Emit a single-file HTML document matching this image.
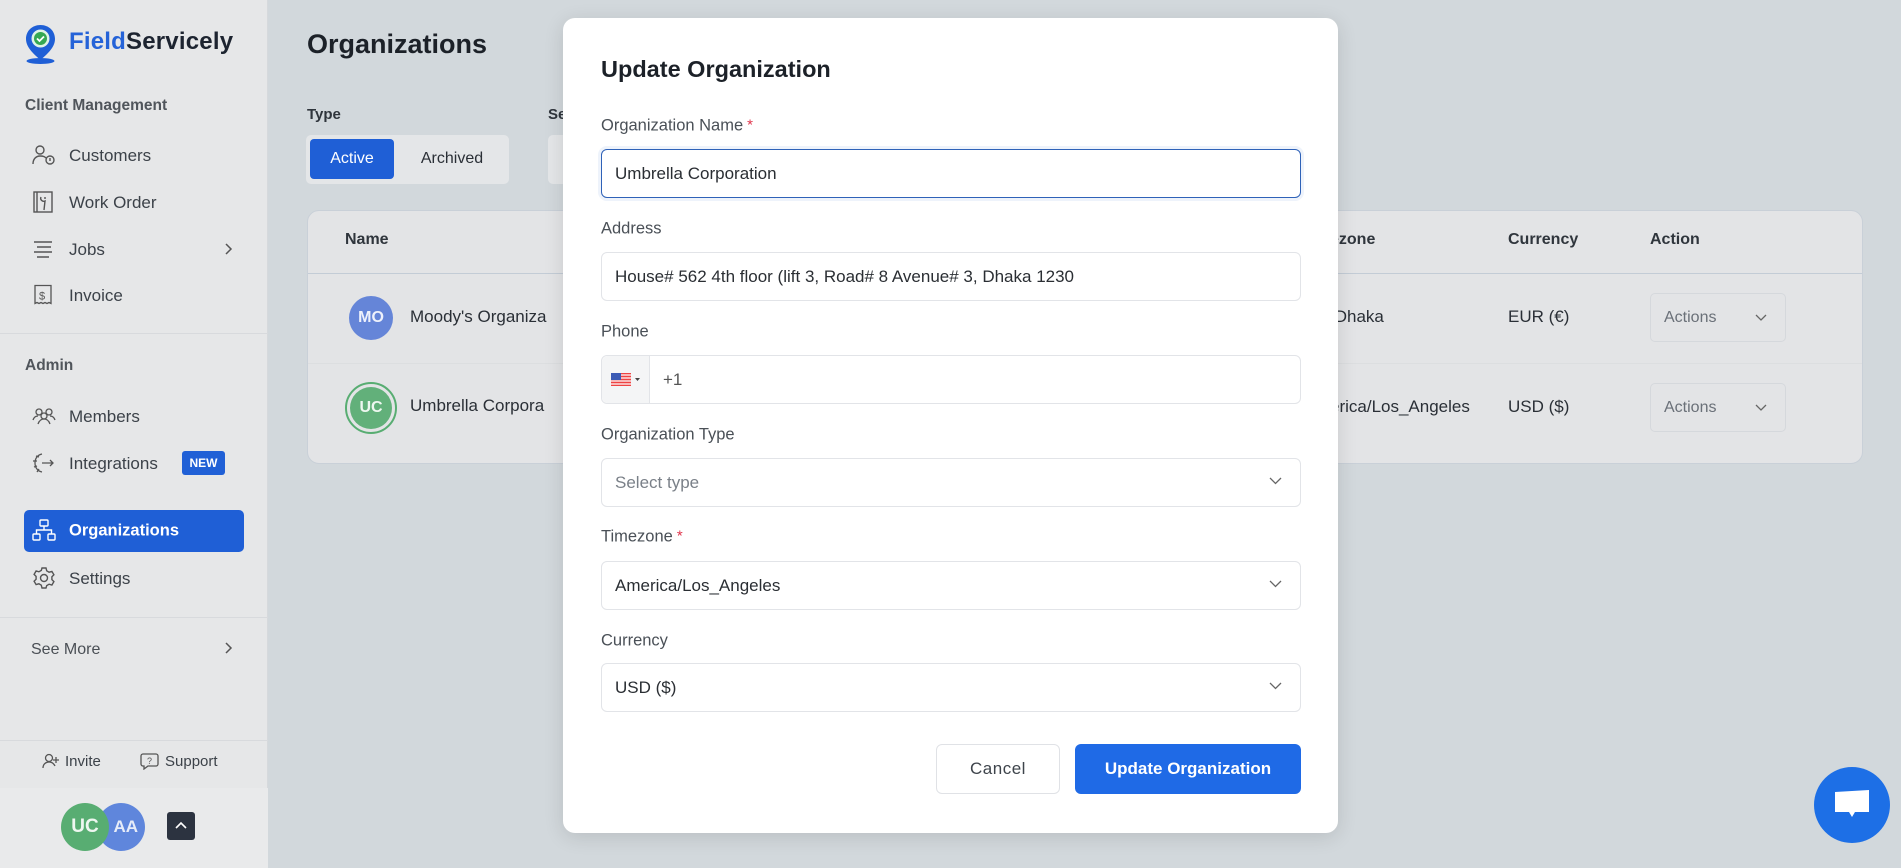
<!DOCTYPE html>
<html><head><meta charset="utf-8"><style>
*{box-sizing:border-box;margin:0;padding:0}
body{width:1901px;height:868px;overflow:hidden;font-family:"Liberation Sans",sans-serif;background:#d2d8dc;position:relative;color:#2a2f36}
.a{position:absolute}
.sb{left:0;top:0;width:268px;height:868px;background:#e6e7e8;border-right:1px solid #d6d9dc}
.nav{position:absolute;left:69px;font-size:17px;color:#3c4249;transform:translateY(-50%)}
.ic{position:absolute;left:32px;transform:translateY(-50%)}
.sec{position:absolute;left:25px;font-size:15.5px;font-weight:bold;color:#50555b;transform:translateY(-50%)}
.lbl{position:absolute;left:601px;font-size:16.5px;color:#4a5057;transform:translateY(-50%)}
.inp{position:absolute;left:601px;width:700px;height:49px;border:1px solid #e2e4e8;border-radius:6px;background:#fff;font-size:17px;color:#2a2e33;padding-left:13px;line-height:47px}
.chev{position:absolute;right:18px;top:18px}
.star{color:#e0334a;font-size:15px;vertical-align:top;margin-left:4px}
</style></head><body>
<div class="a sb"></div>
<svg class="a" style="left:24px;top:23px" width="33" height="42" viewBox="0 0 33 42"><path d="M16.5 2C8 2 2 8 2 16c0 9 9 16 14.5 21C22 32 31 25 31 16 31 8 25 2 16.5 2z" fill="#1f5fd6"/><ellipse cx="16.5" cy="38" rx="14" ry="3" fill="#1f5fd6"/><circle cx="16.5" cy="15.5" r="9" fill="#dff3e6"/><circle cx="16.5" cy="15.5" r="6.5" fill="#34a853"/><path d="M13 15.5l2.5 2.5 4.5-4.5" stroke="#fff" stroke-width="1.8" fill="none"/></svg>
<div class="a" style="left:69px;top:28px;font-size:24px;font-weight:bold;letter-spacing:0.2px"><span style="color:#2563d8">Field</span><span style="color:#1d2430">Servicely</span></div>
<div class="sec" style="top:106px">Client Management</div>
<svg class="ic" style="top:155px" width="24" height="22" viewBox="0 0 24 22" fill="none" stroke="#555" stroke-width="1.4"><circle cx="8" cy="6" r="4"/><path d="M1 20c0-5 3-8 7-8s5 1 6 2"/><circle cx="18" cy="16" r="4"/><path d="M18 14v3"/></svg>
<div class="nav" style="top:156px">Customers</div>
<svg class="ic" style="top:202px;left:33px" width="20" height="22" viewBox="0 0 20 22" fill="none" stroke="#555" stroke-width="1.4"><rect x="1" y="1" width="18" height="20"/><path d="M4 1v20"/><path d="M8 6a3 3 0 0 0 4 4l-1 9M12 6v2"/></svg>
<div class="nav" style="top:203px">Work Order</div>
<svg class="ic" style="top:249px;left:33px" width="20" height="18" viewBox="0 0 20 18" stroke="#555" stroke-width="1.6"><path d="M1 2h18M4 7h14M1 12h18M4 17h12"/></svg>
<div class="nav" style="top:250px">Jobs</div>
<svg class="a" style="left:224px;top:242px" width="9" height="14" viewBox="0 0 9 14" fill="none" stroke="#555" stroke-width="1.5"><path d="M2 2l5 5-5 5"/></svg>
<svg class="ic" style="top:295px;left:34px" width="18" height="21" viewBox="0 0 18 21" fill="none" stroke="#555" stroke-width="1.3"><path d="M1 1h16v18l-2-1-2 1-2-1-2 1-2-1-2 1-2-1-2 1z"/><text x="5" y="15" font-size="11" fill="#555" stroke="none" font-family="Liberation Sans">$</text></svg>
<div class="nav" style="top:296px">Invoice</div>
<div class="a" style="left:0;top:333px;width:268px;height:1px;background:#d8dadd"></div>
<div class="sec" style="top:366px">Admin</div>
<svg class="ic" style="top:416px" width="24" height="18" viewBox="0 0 24 18" fill="none" stroke="#555" stroke-width="1.3"><circle cx="7" cy="5" r="3"/><circle cx="17" cy="5" r="3"/><circle cx="12" cy="9" r="3"/><path d="M1 13c1-3 3-4 5-4M23 13c-1-3-3-4-5-4M6 17c1-3 3-5 6-5s5 2 6 5"/></svg>
<div class="nav" style="top:417px">Members</div>
<svg class="ic" style="top:463px" width="24" height="22" viewBox="0 0 24 22" fill="none" stroke="#555" stroke-width="1.3"><path d="M10 2C5 3 3 7 3 11s2 8 7 9M7 5L4 4M5 9H1M5 14l-3 1M7 17l-2 3"/><path d="M10 11h11M18 8l3 3-3 3"/></svg>
<div class="nav" style="top:464px">Integrations</div>
<div class="a" style="left:182px;top:451px;width:43px;height:24px;background:#2060d6;border-radius:3px;color:#fff;font-size:12px;font-weight:bold;text-align:center;line-height:24px">NEW</div>
<div class="a" style="left:24px;top:510px;width:220px;height:42px;background:#1f5fd6;border-radius:5px"></div>
<svg class="ic" style="top:530px" width="24" height="22" viewBox="0 0 24 22" fill="none" stroke="#fff" stroke-width="1.4"><rect x="8" y="1" width="8" height="6" rx="1"/><rect x="1" y="15" width="7" height="6" rx="1"/><rect x="16" y="15" width="7" height="6" rx="1"/><path d="M12 7v4M4.5 15v-4h15v4"/></svg>
<div class="nav" style="top:531px;color:#fff;font-weight:bold;font-size:16.5px">Organizations</div>
<svg class="ic" style="top:578px" width="24" height="24" viewBox="0 0 24 24" fill="none" stroke="#555" stroke-width="1.4"><circle cx="12" cy="12" r="3.5"/><path d="M10 2h4l.7 2.8 2.4 1.4 2.8-.8 2 3.4-2 2v2.8l2 2-2 3.4-2.8-.8-2.4 1.4L14 22h-4l-.7-2.8-2.4-1.4-2.8.8-2-3.4 2-2v-2.8l-2-2 2-3.4 2.8.8 2.4-1.4z"/></svg>
<div class="nav" style="top:579px">Settings</div>
<div class="a" style="left:0;top:617px;width:268px;height:1px;background:#d8dadd"></div>
<div class="nav" style="top:650px;left:31px;font-size:16px;color:#4a4f55">See More</div>
<svg class="a" style="left:224px;top:641px" width="9" height="14" viewBox="0 0 9 14" fill="none" stroke="#555" stroke-width="1.5"><path d="M2 2l5 5-5 5"/></svg>
<div class="a" style="left:0;top:740px;width:268px;height:1px;background:#d8dadd"></div>
<svg class="a" style="left:42px;top:753px" width="18" height="16" viewBox="0 0 18 16" fill="none" stroke="#555" stroke-width="1.3"><circle cx="7" cy="5" r="3.5"/><path d="M1 15c0-4 3-6 6-6s5 2 6 4M14 4v6M11 7h6"/></svg>
<div class="a" style="left:65px;top:753px;font-size:15px;color:#3c4249">Invite</div>
<svg class="a" style="left:140px;top:753px" width="19" height="17" viewBox="0 0 19 17" fill="none" stroke="#555" stroke-width="1.3"><path d="M3 1h13a2 2 0 0 1 2 2v8a2 2 0 0 1-2 2H8l-4 3v-3H3a2 2 0 0 1-2-2V3a2 2 0 0 1 2-2z"/><text x="7" y="11" font-size="9" fill="#555" stroke="none">?</text></svg>
<div class="a" style="left:165px;top:753px;font-size:15px;color:#3c4249">Support</div>
<div class="a" style="left:0;top:788px;width:268px;height:80px;background:#e9eaeb"></div>
<div class="a" style="left:97px;top:803px;width:48px;height:48px;border-radius:50%;background:#5f86dc;color:#e7ecf8;font-size:17px;font-weight:bold;line-height:48px;text-align:right;padding-right:7px">AA</div>
<div class="a" style="left:61px;top:803px;width:48px;height:48px;border-radius:50%;background:#58ad72;color:#eef7f0;font-size:19px;font-weight:bold;line-height:48px;text-align:center">UC</div>
<div class="a" style="left:167px;top:812px;width:28px;height:28px;border-radius:3px;background:#2c3340"></div>
<svg class="a" style="left:174px;top:821px" width="14" height="9" viewBox="0 0 14 9" fill="none" stroke="#fff" stroke-width="1.6"><path d="M2 7l5-5 5 5"/></svg>

<div class="a" style="left:307px;top:29px;font-size:27px;font-weight:bold;color:#1c2128">Organizations</div>
<div class="a" style="left:307px;top:106px;font-size:15px;font-weight:bold;color:#2f353c">Type</div>
<div class="a" style="left:548px;top:106px;font-size:15px;font-weight:bold;color:#2f353c">Se</div>
<div class="a" style="left:306px;top:135px;width:203px;height:49px;background:#e4e6e8;border-radius:5px"></div>
<div class="a" style="left:310px;top:139px;width:84px;height:40px;background:#1f5fd6;border-radius:4px;color:#fff;font-size:16px;text-align:center;line-height:40px">Active</div>
<div class="a" style="left:400px;top:139px;width:104px;height:40px;color:#2a2f36;font-size:16px;text-align:center;line-height:40px">Archived</div>
<div class="a" style="left:548px;top:135px;width:20px;height:49px;background:#e4e6e8;border-radius:5px 0 0 5px"></div>
<div class="a" style="left:307px;top:210px;width:1556px;height:254px;background:#e3e4e6;border:1px solid #c9d0d8;border-radius:12px;overflow:hidden">
 <div class="a" style="left:0;top:62px;width:100%;height:1px;background:#c3ccd6"></div>
 <div class="a" style="left:0;top:152px;width:100%;height:1px;background:#dcdee0"></div>
</div>
<div class="a" style="left:345px;top:231px;font-size:16px;font-weight:bold;color:#2f353c">Name</div>
<div class="a" style="left:349px;top:296px;width:44px;height:44px;border-radius:50%;background:#6585d8;color:#eef1fb;font-size:16px;font-weight:bold;line-height:44px;text-align:center">MO</div>
<div class="a" style="left:410px;top:307px;font-size:17px;color:#2a2f36">Moody's Organiza</div>
<div class="a" style="left:345px;top:382px;width:52px;height:52px;border-radius:50%;border:2px solid #58ad72;background:#e3e4e6"></div>
<div class="a" style="left:350px;top:387px;width:42px;height:42px;border-radius:50%;background:#62b07a;color:#eef7f0;font-size:16px;font-weight:bold;line-height:42px;text-align:center">UC</div>
<div class="a" style="left:410px;top:396px;font-size:17px;color:#2a2f36">Umbrella Corpora</div>
<div class="a" style="left:1330px;top:231px;font-size:16px;font-weight:bold;color:#2f353c">ezone</div>
<div class="a" style="left:1508px;top:231px;font-size:16px;font-weight:bold;color:#2f353c">Currency</div>
<div class="a" style="left:1650px;top:231px;font-size:16px;font-weight:bold;color:#2f353c">Action</div>
<div class="a" style="left:1330px;top:307px;font-size:17px">/Dhaka</div>
<div class="a" style="left:1508px;top:307px;font-size:17px">EUR (€)</div>
<div class="a" style="left:1330px;top:397px;font-size:17px">erica/Los_Angeles</div>
<div class="a" style="left:1508px;top:397px;font-size:17px">USD ($)</div>
<div class="a" style="left:1650px;top:293px;width:136px;height:49px;border:1px solid #d5d8dc;border-radius:5px;font-size:16px;color:#6a7078;line-height:47px;padding-left:13px">Actions</div>
<div class="a" style="left:1650px;top:383px;width:136px;height:49px;border:1px solid #d5d8dc;border-radius:5px;font-size:16px;color:#6a7078;line-height:47px;padding-left:13px">Actions</div>
<svg class="a" style="left:1755px;top:314px" width="12" height="8" viewBox="0 0 12 8" fill="none" stroke="#666" stroke-width="1.3"><path d="M1 1l5 5 5-5"/></svg>
<svg class="a" style="left:1755px;top:404px" width="12" height="8" viewBox="0 0 12 8" fill="none" stroke="#666" stroke-width="1.3"><path d="M1 1l5 5 5-5"/></svg>
<div class="a" style="left:1814px;top:767px;width:76px;height:76px;border-radius:50%;background:#1d6fe6"></div>
<svg class="a" style="left:1833px;top:789px" width="38" height="32" viewBox="0 0 38 32"><path d="M2 3l34-2v22H22l-3 5-3-5H2z" fill="#fff"/></svg>

<div class="a" style="left:563px;top:18px;width:775px;height:815px;background:#fff;border-radius:12px;box-shadow:0 4px 20px rgba(0,0,0,.12)"></div>
<div class="a" style="left:601px;top:56px;font-size:23.5px;font-weight:bold;color:#1c2128">Update Organization</div>
<div class="lbl" style="top:126px">Organization Name<span class="star">*</span></div>
<div class="inp" style="top:149px;border:1px solid #2f62b8;box-shadow:0 0 0 3px #eef3fb">Umbrella Corporation</div>
<div class="lbl" style="top:229px">Address</div>
<div class="inp" style="top:252px">House# 562 4th floor (lift 3, Road# 8 Avenue# 3, Dhaka 1230</div>
<div class="lbl" style="top:332px">Phone</div>
<div class="inp" style="top:355px;padding-left:61px;color:#555">+1</div>
<div class="a" style="left:602px;top:356px;width:48px;height:47px;background:#f4f5f6;border-right:1px solid #e2e4e8;border-radius:6px 0 0 6px"></div>
<svg class="a" style="left:611px;top:373px" width="30" height="13" viewBox="0 0 30 13"><rect width="20" height="13" fill="#e44"/><path d="M0 2h20M0 5h20M0 8h20M0 11h20" stroke="#fff" stroke-width="1.2"/><rect width="10" height="7" fill="#3b5bb5"/><path d="M24 5h5l-2.5 3z" fill="#444"/></svg>
<div class="lbl" style="top:435px">Organization Type</div>
<div class="inp" style="top:458px;color:#7a8088">Select type<svg class="chev" width="13" height="8" viewBox="0 0 13 8" fill="none" stroke="#666" stroke-width="1.3"><path d="M1 1l5.5 5.5L12 1"/></svg></div>
<div class="lbl" style="top:537px">Timezone<span class="star">*</span></div>
<div class="inp" style="top:561px">America/Los_Angeles<svg class="chev" width="13" height="8" viewBox="0 0 13 8" fill="none" stroke="#666" stroke-width="1.3"><path d="M1 1l5.5 5.5L12 1"/></svg></div>
<div class="lbl" style="top:641px">Currency</div>
<div class="inp" style="top:663px">USD ($)<svg class="chev" width="13" height="8" viewBox="0 0 13 8" fill="none" stroke="#666" stroke-width="1.3"><path d="M1 1l5.5 5.5L12 1"/></svg></div>
<div class="a" style="left:936px;top:744px;width:124px;height:50px;border:1px solid #e0e2e6;border-radius:6px;font-size:17px;color:#3e444b;text-align:center;line-height:48px;letter-spacing:.5px">Cancel</div>
<div class="a" style="left:1075px;top:744px;width:226px;height:50px;background:#1f6ae6;border-radius:6px;font-size:17px;font-weight:bold;color:#fff;text-align:center;line-height:50px">Update Organization</div>
</body></html>
